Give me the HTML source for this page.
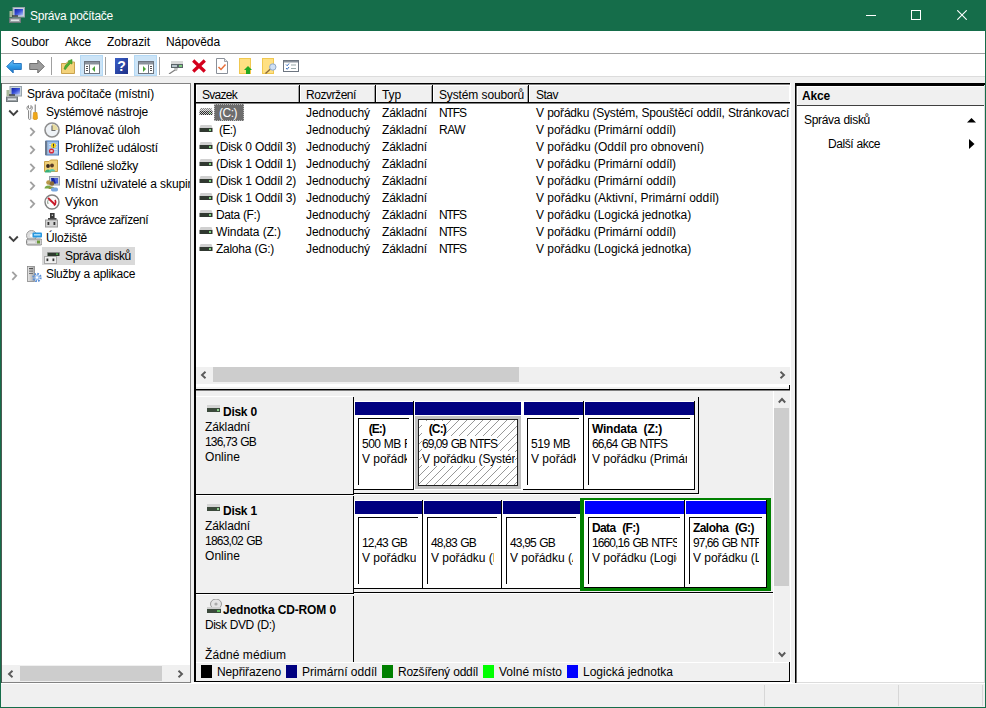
<!DOCTYPE html>
<html lang="cs"><head><meta charset="utf-8"><title>Správa počítače</title>
<style>
html,body{margin:0;padding:0}
body{width:986px;height:708px;position:relative;overflow:hidden;background:#f0f0f0;font:12px/16px 'Liberation Sans',sans-serif;}
body>div,body>svg{position:absolute;display:block}
.t{white-space:pre;height:16px;line-height:16px}
</style></head><body>
<div style="left:0px;top:0px;width:986px;height:708px;background:#156d4a;"></div>
<div style="left:1px;top:31px;width:984px;height:676px;background:#f0f0f0;"></div>
<div class="t" style="left:30px;top:8px;color:#fff;letter-spacing:-0.27px;word-spacing:0.27px;">Správa počítače</div>
<div style="left:866px;top:15px;width:10px;height:1px;background:#fff;"></div>
<div style="left:911px;top:10px;width:10px;height:10px;background:transparent;border:1px solid #fff;box-sizing:border-box"></div>
<svg style="left:957px;top:10px" width="10" height="10" viewBox="0 0 10 10"><path d="M0.3 0.3 L9.7 9.7 M9.7 0.3 L0.3 9.7" stroke="#fff" stroke-width="1.1" fill="none"/></svg>
<svg style="left:9px;top:7px" width="16" height="16" viewBox="0 0 16 16"><defs><linearGradient id="gpc0" x1="0" y1="0" x2="1" y2="1"><stop offset="0" stop-color="#1020a0"/><stop offset="0.5" stop-color="#3850d8"/><stop offset="1" stop-color="#b8c8f8"/></linearGradient></defs>
<rect x="4" y="0.5" width="11.5" height="9.5" fill="#c8d4dc" stroke="#98a4ac" stroke-width="1"/><rect x="5.5" y="2" width="8.5" height="6.5" fill="url(#gpc0)"/>
<rect x="0.5" y="4" width="3" height="6" fill="#a8b89a"/><path d="M3 9 L9 9" stroke="#222" stroke-width="1.2"/>
<rect x="0.5" y="11" width="11" height="4.5" fill="#9aa0a4" stroke="#70787c" stroke-width="1"/><rect x="2" y="12.5" width="8" height="1.5" fill="#e0e4e8"/></svg>
<div style="left:1px;top:31px;width:984px;height:22px;background:#fff;"></div>
<div class="t" style="left:11px;top:34px;color:#000;letter-spacing:-0.12px;">Soubor</div>
<div class="t" style="left:65px;top:34px;color:#000;letter-spacing:-0.17px;">Akce</div>
<div class="t" style="left:107px;top:34px;color:#000;letter-spacing:-0.04px;">Zobrazit</div>
<div class="t" style="left:166px;top:34px;color:#000;letter-spacing:-0.09px;">Nápověda</div>
<div style="left:1px;top:53px;width:984px;height:1px;background:#a0a0a0;"></div>
<div style="left:1px;top:54px;width:984px;height:22px;background:#fff;"></div>
<div style="left:1px;top:76px;width:984px;height:1px;background:#dcdcdc;"></div>
<div style="left:1px;top:83px;width:190px;height:600px;background:#828282;"></div>
<div style="left:1px;top:83px;width:1px;height:600px;background:#4a5a52;"></div>
<div style="left:2px;top:84px;width:188px;height:598px;background:#fff;"></div>
<svg style="left:6px;top:86px" width="16" height="16" viewBox="0 0 16 16"><defs><linearGradient id="gpc" x1="0" y1="0" x2="1" y2="1"><stop offset="0" stop-color="#1020a0"/><stop offset="0.5" stop-color="#3850d8"/><stop offset="1" stop-color="#b8c8f8"/></linearGradient></defs>
<rect x="4" y="0.5" width="11.5" height="9.5" fill="#c8d4dc" stroke="#98a4ac" stroke-width="1"/><rect x="5.5" y="2" width="8.5" height="6.5" fill="url(#gpc)"/>
<rect x="0.5" y="4" width="3" height="6" fill="#a8b89a"/><path d="M3 9 L9 9" stroke="#222" stroke-width="1.2"/>
<rect x="0.5" y="11" width="11" height="4.5" fill="#9aa0a4" stroke="#70787c" stroke-width="1"/><rect x="2" y="12.5" width="8" height="1.5" fill="#e0e4e8"/></svg>
<div class="t" style="left:27px;top:86px;color:#000;letter-spacing:-0.17px;word-spacing:0.17px;">Správa počítače (místní)</div>
<svg style="left:8px;top:109px" width="11" height="8" viewBox="0 0 11 8"><path d="M1.2 1.5 L5.5 5.8 L9.8 1.5" stroke="#404040" stroke-width="1.9" fill="none"/></svg>
<svg style="left:26px;top:104px" width="16" height="16" viewBox="0 0 16 16"><path d="M2.5 1.5 C0.5 2.5 0.5 5.5 2.5 6.5 L2.5 14.5 C2.5 15.7 4.8 15.7 4.8 14.5 L4.8 6.5 C6.8 5.5 6.8 2.5 5 1.5 L5 4 L3.6 4.6 L2.5 4 Z" fill="#f4f4f4" stroke="#8a8a8a" stroke-width="1"/>
<rect x="8.6" y="0.5" width="1.4" height="8" fill="#9a9a9a"/><path d="M7.5 8.5 L11 8.5 L11.5 14.5 C11.5 16 7 16 7 14.5 Z" fill="#f0a818" stroke="#d08a08" stroke-width="0.6"/></svg>
<div class="t" style="left:46px;top:104px;color:#000;letter-spacing:-0.20px;word-spacing:0.20px;">Systémové nástroje</div>
<svg style="left:29px;top:127px" width="7" height="10" viewBox="0 0 7 10"><path d="M1.3 0.8 L5.2 4.8 L1.3 8.8" stroke="#a0a0a0" stroke-width="1.8" fill="none"/></svg>
<svg style="left:44px;top:122px" width="16" height="16" viewBox="0 0 16 16"><circle cx="8" cy="8" r="7" fill="#eef2f6" stroke="#8e8e8e" stroke-width="1.6"/><path d="M8 8 L14 8 A6 6 0 0 0 8 2 Z" fill="#e8dca0"/><path d="M8 3.5 L8 8.5 L11.5 8.5" stroke="#707070" stroke-width="1.2" fill="none"/></svg>
<div class="t" style="left:65px;top:122px;color:#000;letter-spacing:-0.03px;word-spacing:0.03px;">Plánovač úloh</div>
<svg style="left:29px;top:145px" width="7" height="10" viewBox="0 0 7 10"><path d="M1.3 0.8 L5.2 4.8 L1.3 8.8" stroke="#a0a0a0" stroke-width="1.8" fill="none"/></svg>
<svg style="left:44px;top:140px" width="16" height="16" viewBox="0 0 16 16"><rect x="2" y="1" width="12.5" height="14" fill="#9fc0e8" stroke="#4a78b8" stroke-width="1"/><rect x="1" y="1" width="2.2" height="14" fill="#6a7a90"/>
<path d="M5 4.5 H13 M5 7 H13 M5 9.5 H13 M5 12 H13" stroke="#dce8f8" stroke-width="0.8"/>
<circle cx="9.5" cy="5.5" r="2.6" fill="#f2d020"/><rect x="9" y="3.8" width="1" height="2.4" fill="#333"/><rect x="9" y="6.6" width="1" height="1" fill="#333"/>
<circle cx="7.5" cy="11" r="2.6" fill="#d82838"/><path d="M6.5 10 L8.5 12 M8.5 10 L6.5 12" stroke="#fff" stroke-width="0.9"/></svg>
<div class="t" style="left:65px;top:140px;color:#000;letter-spacing:-0.14px;word-spacing:0.14px;">Prohlížeč událostí</div>
<svg style="left:29px;top:163px" width="7" height="10" viewBox="0 0 7 10"><path d="M1.3 0.8 L5.2 4.8 L1.3 8.8" stroke="#a0a0a0" stroke-width="1.8" fill="none"/></svg>
<svg style="left:44px;top:158px" width="16" height="16" viewBox="0 0 16 16"><path d="M0.5 3.5 L5 3.5 L6.5 2 L13.5 2 L13.5 13.5 L0.5 13.5 Z" fill="#f0d078" stroke="#c8a048" stroke-width="1"/>
<circle cx="4" cy="8" r="1.9" fill="#3a2a20"/><circle cx="8" cy="7.5" r="1.9" fill="#5a3a28"/>
<path d="M0.8 14.5 C1 10.5 7 10.5 7.2 14.5 Z" fill="#38b078"/><path d="M5 13.5 C5.2 10 11 10 11.2 13.5 Z" fill="#58c8b0"/></svg>
<div class="t" style="left:65px;top:158px;color:#000;letter-spacing:-0.34px;word-spacing:0.34px;">Sdílené složky</div>
<svg style="left:29px;top:181px" width="7" height="10" viewBox="0 0 7 10"><path d="M1.3 0.8 L5.2 4.8 L1.3 8.8" stroke="#a0a0a0" stroke-width="1.8" fill="none"/></svg>
<svg style="left:44px;top:176px" width="16" height="16" viewBox="0 0 16 16"><rect x="5.5" y="0.5" width="10" height="8.5" fill="#c8d0d8" stroke="#98a0a8"/><rect x="7" y="2" width="7" height="5.5" fill="#4a60d8"/><path d="M7 2 L10 2 L12 7.5 L9 7.5 Z" fill="#1828a0"/>
<circle cx="4.5" cy="6.5" r="2.3" fill="#b89848"/><circle cx="8" cy="7.5" r="2.3" fill="#8a6a38"/>
<path d="M0.5 12.5 C0.7 8.5 7.5 8.5 7.7 12.5 Z" fill="#78a848"/><path d="M4.5 13 C4.7 9.5 10.5 9.5 10.7 13 Z" fill="#989838"/><rect x="7" y="11.5" width="7" height="4" rx="1.8" fill="#78a8e0"/></svg>
<div class="t" style="left:65px;top:176px;color:#000;letter-spacing:-0.10px;word-spacing:0.10px;width:125px;overflow:hidden;">Místní uživatelé a skupiny</div>
<svg style="left:29px;top:199px" width="7" height="10" viewBox="0 0 7 10"><path d="M1.3 0.8 L5.2 4.8 L1.3 8.8" stroke="#a0a0a0" stroke-width="1.8" fill="none"/></svg>
<svg style="left:44px;top:194px" width="16" height="16" viewBox="0 0 16 16"><circle cx="8" cy="8" r="7" fill="#fbfbfb" stroke="#808080" stroke-width="1.4"/><path d="M4 4 L11.5 11" stroke="#c81828" stroke-width="2"/><path d="M11 6 A4.5 4.5 0 0 1 10 11.5" stroke="#c81828" stroke-width="1.6" fill="none"/><path d="M4 10 A4.5 4.5 0 0 1 4.5 5.5" stroke="#889a88" stroke-width="1" fill="none"/></svg>
<div class="t" style="left:65px;top:194px;color:#000;letter-spacing:-0.07px;">Výkon</div>
<svg style="left:44px;top:212px" width="16" height="16" viewBox="0 0 16 16"><rect x="6" y="1" width="4.6" height="6.5" fill="#383838"/><rect x="7.7" y="2.6" width="1.2" height="1.4" fill="#d8d8d8"/><rect x="4" y="6" width="8.5" height="2" fill="#484848"/><rect x="1.5" y="8" width="12" height="7" fill="#d4d4d4" stroke="#9a9a9a"/><rect x="3.5" y="10" width="1.8" height="3" fill="#333"/><rect x="9.5" y="10" width="1.8" height="3" fill="#333"/></svg>
<div class="t" style="left:65px;top:212px;color:#000;letter-spacing:-0.47px;word-spacing:0.47px;">Správce zařízení</div>
<svg style="left:8px;top:235px" width="11" height="8" viewBox="0 0 11 8"><path d="M1.2 1.5 L5.5 5.8 L9.8 1.5" stroke="#404040" stroke-width="1.9" fill="none"/></svg>
<svg style="left:26px;top:230px" width="16" height="16" viewBox="0 0 16 16"><circle cx="5.5" cy="5.5" r="5" fill="#dcdcdc" stroke="#a0a0a0"/><circle cx="5.5" cy="5.5" r="1.5" fill="#fff"/>
<rect x="6.5" y="2.5" width="9.5" height="5" rx="1" fill="#2898e0"/><rect x="8" y="4" width="6.5" height="1.6" fill="#a8dcf8"/>
<rect x="0.5" y="9" width="15.5" height="6" rx="1.5" fill="#d0d0d0" stroke="#888"/><rect x="11" y="10.5" width="3" height="3" fill="#6a9a3a"/><rect x="2" y="11.5" width="7" height="1.2" fill="#f4f4f4"/></svg>
<div class="t" style="left:46px;top:230px;color:#000;letter-spacing:-0.21px;">Úložiště</div>
<div style="left:42px;top:247px;width:93px;height:18px;background:#d9d9d9;"></div>
<svg style="left:44px;top:248px" width="16" height="16" viewBox="0 0 16 16"><rect x="3.5" y="4.5" width="12" height="3.5" fill="#2e3a2e"/><rect x="3.5" y="4" width="12" height="1" fill="#8a8a8a"/><rect x="12" y="5.5" width="2" height="1.2" fill="#58c858"/>
<rect x="0.5" y="8.5" width="12" height="7" fill="#f0f0f0" stroke="#a8a8a8"/><rect x="2.5" y="10.5" width="1.8" height="2.6" fill="#333"/><rect x="8.5" y="10.5" width="1.8" height="2.6" fill="#333"/></svg>
<div class="t" style="left:65px;top:248px;color:#000;letter-spacing:-0.31px;word-spacing:0.31px;">Správa disků</div>
<svg style="left:11px;top:271px" width="7" height="10" viewBox="0 0 7 10"><path d="M1.3 0.8 L5.2 4.8 L1.3 8.8" stroke="#a0a0a0" stroke-width="1.8" fill="none"/></svg>
<svg style="left:26px;top:266px" width="16" height="16" viewBox="0 0 16 16"><defs><linearGradient id="gsv" x1="0" y1="0" x2="1" y2="0"><stop offset="0" stop-color="#e8e8e8"/><stop offset="1" stop-color="#a8a8a8"/></linearGradient></defs>
<rect x="1.5" y="0.5" width="7" height="15" fill="url(#gsv)" stroke="#888" stroke-width="0.8"/><rect x="3" y="2" width="4" height="1.2" fill="#505050"/><rect x="3" y="4.6" width="4" height="1" fill="#707070"/><rect x="3" y="7" width="4" height="1" fill="#707070"/>
<circle cx="11" cy="11.5" r="3.6" fill="none" stroke="#5a90d8" stroke-width="2.2" stroke-dasharray="1.6 1.2"/><circle cx="11" cy="11.5" r="2.6" fill="#9cc0f0"/><circle cx="11" cy="11.5" r="1.2" fill="#fff"/></svg>
<div class="t" style="left:46px;top:266px;color:#000;letter-spacing:-0.29px;word-spacing:0.29px;">Služby a aplikace</div>
<div style="left:2px;top:665px;width:188px;height:17px;background:#f0f0f0;"></div>
<div style="left:20px;top:666px;width:142px;height:15px;background:#cdcdcd;"></div>
<svg style="left:7px;top:670px" width="7" height="8" viewBox="0 0 7 8"><path d="M5.5 0.8 L2 4 L5.5 7.2" stroke="#5a5a5a" stroke-width="1.9" fill="none"/></svg>
<svg style="left:177px;top:670px" width="7" height="8" viewBox="0 0 7 8"><path d="M1.5 0.8 L5 4 L1.5 7.2" stroke="#5a5a5a" stroke-width="1.9" fill="none"/></svg>
<div style="left:194px;top:83px;width:597px;height:600px;background:#000;"></div>
<div style="left:196px;top:84px;width:595px;height:1px;background:#808080;"></div>
<div style="left:196px;top:85px;width:594px;height:597px;background:#fff;"></div>
<div style="left:197px;top:86px;width:592px;height:16px;background:#f0f0f0;"></div>
<div style="left:196px;top:102px;width:594px;height:1px;background:#000;"></div>
<div style="left:196px;top:103px;width:594px;height:1px;background:#808080;"></div>
<div class="t" style="left:202px;top:87px;color:#000;letter-spacing:-0.73px;">Svazek</div>
<div style="left:298px;top:86px;width:1px;height:16px;background:#a0a0a0;"></div>
<div style="left:299px;top:85px;width:1px;height:18px;background:#000;"></div>
<div style="left:300px;top:85px;width:1px;height:17px;background:#fff;"></div>
<div class="t" style="left:306px;top:87px;color:#000;letter-spacing:-0.45px;">Rozvržení</div>
<div style="left:374px;top:86px;width:1px;height:16px;background:#a0a0a0;"></div>
<div style="left:375px;top:85px;width:1px;height:18px;background:#000;"></div>
<div style="left:376px;top:85px;width:1px;height:17px;background:#fff;"></div>
<div class="t" style="left:382px;top:87px;color:#000;letter-spacing:-0.11px;">Typ</div>
<div style="left:431px;top:86px;width:1px;height:16px;background:#a0a0a0;"></div>
<div style="left:432px;top:85px;width:1px;height:18px;background:#000;"></div>
<div style="left:433px;top:85px;width:1px;height:17px;background:#fff;"></div>
<div class="t" style="left:439px;top:87px;color:#000;letter-spacing:-0.13px;word-spacing:0.13px;">Systém souborů</div>
<div style="left:527px;top:86px;width:1px;height:16px;background:#a0a0a0;"></div>
<div style="left:528px;top:85px;width:1px;height:18px;background:#000;"></div>
<div style="left:529px;top:85px;width:1px;height:17px;background:#fff;"></div>
<div class="t" style="left:536px;top:87px;color:#000;letter-spacing:-0.50px;">Stav</div>
<div style="left:214px;top:104px;width:30px;height:17px;background:#6d6d6d;outline:1px dotted #bbb;outline-offset:-1px"></div>
<svg style="left:199px;top:105px" width="16" height="16" viewBox="0 0 16 16"><defs><pattern id="chk" width="2" height="2" patternUnits="userSpaceOnUse"><rect x="0" y="0" width="1" height="1" fill="#fff"/><rect x="1" y="1" width="1" height="1" fill="#fff"/></pattern></defs><path d="M1.5 3 L12.5 3 L13.5 6 L0.5 6 Z" fill="#8a8a8a"/><rect x="0.5" y="6" width="13" height="4" fill="#2a2a2a"/><rect x="10" y="7" width="2" height="2" fill="#3a7a3a"/><rect x="0" y="3" width="14" height="7" fill="url(#chk)" opacity="0.75"/></svg>
<div class="t" style="left:219px;top:105px;color:#fff;letter-spacing:-0.50px;">(C:)</div>
<div class="t" style="left:306px;top:105px;color:#000;letter-spacing:-0.07px;">Jednoduchý</div>
<div class="t" style="left:382px;top:105px;color:#000;letter-spacing:-0.13px;">Základní</div>
<div class="t" style="left:439px;top:105px;color:#000;letter-spacing:-1.09px;">NTFS</div>
<div class="t" style="left:536px;top:105px;color:#000;letter-spacing:-0.20px;word-spacing:0.20px;">V pořádku (Systém, Spouštěcí oddíl, Stránkovací</div>
<svg style="left:199px;top:122px" width="16" height="16" viewBox="0 0 16 16"><path d="M1.5 3 L12.5 3 L13.5 6 L0.5 6 Z" fill="#d0d0d0"/><rect x="0.5" y="6" width="13" height="4" fill="#303830"/><rect x="10" y="7" width="2" height="2" fill="#7fd07f"/></svg>
<div class="t" style="left:219px;top:122px;color:#000;letter-spacing:-0.59px;">(E:)</div>
<div class="t" style="left:306px;top:122px;color:#000;letter-spacing:-0.07px;">Jednoduchý</div>
<div class="t" style="left:382px;top:122px;color:#000;letter-spacing:-0.13px;">Základní</div>
<div class="t" style="left:439px;top:122px;color:#000;letter-spacing:-0.52px;">RAW</div>
<div class="t" style="left:536px;top:122px;color:#000;letter-spacing:-0.03px;word-spacing:0.03px;">V pořádku (Primární oddíl)</div>
<svg style="left:199px;top:139px" width="16" height="16" viewBox="0 0 16 16"><path d="M1.5 3 L12.5 3 L13.5 6 L0.5 6 Z" fill="#d0d0d0"/><rect x="0.5" y="6" width="13" height="4" fill="#303830"/><rect x="10" y="7" width="2" height="2" fill="#7fd07f"/></svg>
<div class="t" style="left:216px;top:139px;color:#000;letter-spacing:-0.26px;word-spacing:0.26px;">(Disk 0 Oddíl 3)</div>
<div class="t" style="left:306px;top:139px;color:#000;letter-spacing:-0.07px;">Jednoduchý</div>
<div class="t" style="left:382px;top:139px;color:#000;letter-spacing:-0.13px;">Základní</div>
<div class="t" style="left:536px;top:139px;color:#000;">V pořádku (Oddíl pro obnovení)</div>
<svg style="left:199px;top:156px" width="16" height="16" viewBox="0 0 16 16"><path d="M1.5 3 L12.5 3 L13.5 6 L0.5 6 Z" fill="#d0d0d0"/><rect x="0.5" y="6" width="13" height="4" fill="#303830"/><rect x="10" y="7" width="2" height="2" fill="#7fd07f"/></svg>
<div class="t" style="left:216px;top:156px;color:#000;letter-spacing:-0.26px;word-spacing:0.26px;">(Disk 1 Oddíl 1)</div>
<div class="t" style="left:306px;top:156px;color:#000;letter-spacing:-0.07px;">Jednoduchý</div>
<div class="t" style="left:382px;top:156px;color:#000;letter-spacing:-0.13px;">Základní</div>
<div class="t" style="left:536px;top:156px;color:#000;letter-spacing:-0.03px;word-spacing:0.03px;">V pořádku (Primární oddíl)</div>
<svg style="left:199px;top:173px" width="16" height="16" viewBox="0 0 16 16"><path d="M1.5 3 L12.5 3 L13.5 6 L0.5 6 Z" fill="#d0d0d0"/><rect x="0.5" y="6" width="13" height="4" fill="#303830"/><rect x="10" y="7" width="2" height="2" fill="#7fd07f"/></svg>
<div class="t" style="left:216px;top:173px;color:#000;letter-spacing:-0.26px;word-spacing:0.26px;">(Disk 1 Oddíl 2)</div>
<div class="t" style="left:306px;top:173px;color:#000;letter-spacing:-0.07px;">Jednoduchý</div>
<div class="t" style="left:382px;top:173px;color:#000;letter-spacing:-0.13px;">Základní</div>
<div class="t" style="left:536px;top:173px;color:#000;letter-spacing:-0.03px;word-spacing:0.03px;">V pořádku (Primární oddíl)</div>
<svg style="left:199px;top:190px" width="16" height="16" viewBox="0 0 16 16"><path d="M1.5 3 L12.5 3 L13.5 6 L0.5 6 Z" fill="#d0d0d0"/><rect x="0.5" y="6" width="13" height="4" fill="#303830"/><rect x="10" y="7" width="2" height="2" fill="#7fd07f"/></svg>
<div class="t" style="left:216px;top:190px;color:#000;letter-spacing:-0.26px;word-spacing:0.26px;">(Disk 1 Oddíl 3)</div>
<div class="t" style="left:306px;top:190px;color:#000;letter-spacing:-0.07px;">Jednoduchý</div>
<div class="t" style="left:382px;top:190px;color:#000;letter-spacing:-0.13px;">Základní</div>
<div class="t" style="left:536px;top:190px;color:#000;letter-spacing:-0.01px;word-spacing:0.01px;">V pořádku (Aktivní, Primární oddíl)</div>
<svg style="left:199px;top:207px" width="16" height="16" viewBox="0 0 16 16"><path d="M1.5 3 L12.5 3 L13.5 6 L0.5 6 Z" fill="#d0d0d0"/><rect x="0.5" y="6" width="13" height="4" fill="#303830"/><rect x="10" y="7" width="2" height="2" fill="#7fd07f"/></svg>
<div class="t" style="left:216px;top:207px;color:#000;letter-spacing:-0.42px;word-spacing:0.42px;">Data (F:)</div>
<div class="t" style="left:306px;top:207px;color:#000;letter-spacing:-0.07px;">Jednoduchý</div>
<div class="t" style="left:382px;top:207px;color:#000;letter-spacing:-0.13px;">Základní</div>
<div class="t" style="left:439px;top:207px;color:#000;letter-spacing:-1.09px;">NTFS</div>
<div class="t" style="left:536px;top:207px;color:#000;letter-spacing:-0.04px;word-spacing:0.04px;">V pořádku (Logická jednotka)</div>
<svg style="left:199px;top:224px" width="16" height="16" viewBox="0 0 16 16"><path d="M1.5 3 L12.5 3 L13.5 6 L0.5 6 Z" fill="#d0d0d0"/><rect x="0.5" y="6" width="13" height="4" fill="#303830"/><rect x="10" y="7" width="2" height="2" fill="#7fd07f"/></svg>
<div class="t" style="left:216px;top:224px;color:#000;letter-spacing:-0.09px;word-spacing:0.09px;">Windata (Z:)</div>
<div class="t" style="left:306px;top:224px;color:#000;letter-spacing:-0.07px;">Jednoduchý</div>
<div class="t" style="left:382px;top:224px;color:#000;letter-spacing:-0.13px;">Základní</div>
<div class="t" style="left:439px;top:224px;color:#000;letter-spacing:-1.09px;">NTFS</div>
<div class="t" style="left:536px;top:224px;color:#000;letter-spacing:-0.03px;word-spacing:0.03px;">V pořádku (Primární oddíl)</div>
<svg style="left:199px;top:241px" width="16" height="16" viewBox="0 0 16 16"><path d="M1.5 3 L12.5 3 L13.5 6 L0.5 6 Z" fill="#d0d0d0"/><rect x="0.5" y="6" width="13" height="4" fill="#303830"/><rect x="10" y="7" width="2" height="2" fill="#7fd07f"/></svg>
<div class="t" style="left:216px;top:241px;color:#000;letter-spacing:-0.27px;word-spacing:0.27px;">Zaloha (G:)</div>
<div class="t" style="left:306px;top:241px;color:#000;letter-spacing:-0.07px;">Jednoduchý</div>
<div class="t" style="left:382px;top:241px;color:#000;letter-spacing:-0.13px;">Základní</div>
<div class="t" style="left:439px;top:241px;color:#000;letter-spacing:-1.09px;">NTFS</div>
<div class="t" style="left:536px;top:241px;color:#000;letter-spacing:-0.04px;word-spacing:0.04px;">V pořádku (Logická jednotka)</div>
<div style="left:196px;top:367px;width:594px;height:17px;background:#f0f0f0;"></div>
<div style="left:213px;top:367px;width:306px;height:15px;background:#cdcdcd;"></div>
<svg style="left:200px;top:371px" width="7" height="8" viewBox="0 0 7 8"><path d="M5.5 0.8 L2 4 L5.5 7.2" stroke="#5a5a5a" stroke-width="1.9" fill="none"/></svg>
<svg style="left:779px;top:371px" width="7" height="8" viewBox="0 0 7 8"><path d="M1.5 0.8 L5 4 L1.5 7.2" stroke="#5a5a5a" stroke-width="1.9" fill="none"/></svg>
<div style="left:196px;top:384px;width:594px;height:3px;background:#fff;"></div>
<div style="left:196px;top:387px;width:594px;height:2px;background:#f0f0f0;"></div>
<div style="left:196px;top:389px;width:594px;height:1px;background:#000;"></div>
<div style="left:196px;top:390px;width:594px;height:1px;background:#808080;"></div>
<div style="left:789px;top:385px;width:1px;height:5px;background:#000;"></div>
<div style="left:790px;top:83px;width:1px;height:600px;background:#fff;"></div>
<div style="left:196px;top:391px;width:594px;height:271px;background:#f0f0f0;"></div>
<div style="left:196px;top:396px;width:157px;height:1px;background:#fff;"></div>
<div style="left:353px;top:397px;width:1px;height:98px;background:#000;"></div>
<div style="left:196px;top:494px;width:158px;height:1px;background:#000;"></div>
<div style="left:353px;top:493px;width:346px;height:1px;background:#000;"></div>
<div style="left:354px;top:494px;width:346px;height:1px;background:#fff;"></div>
<svg style="left:207px;top:405px" width="13" height="7" viewBox="0 0 13 7"><rect x="0" y="0" width="13" height="3" fill="#d4d4d4"/><rect x="0" y="3" width="13" height="4" fill="#3c4a3c"/><rect x="10" y="4" width="2" height="2" fill="#8fd08f"/></svg>
<div class="t" style="left:223px;top:404px;color:#000;font-weight:bold;letter-spacing:-0.27px;word-spacing:0.27px;">Disk 0</div>
<div class="t" style="left:205px;top:419px;color:#000;letter-spacing:-0.13px;">Základní</div>
<div class="t" style="left:205px;top:434px;color:#000;letter-spacing:-0.80px;word-spacing:0.80px;">136,73 GB</div>
<div class="t" style="left:205px;top:449px;color:#000;letter-spacing:0.05px;">Online</div>
<div style="left:354px;top:401px;width:59px;height:89px;background:#fff;"></div>
<div style="left:355px;top:402px;width:58px;height:13px;background:#000080;"></div>
<div style="left:413px;top:401px;width:1px;height:89px;background:#000;"></div>
<div style="left:354px;top:489px;width:60px;height:1px;background:#000;"></div>
<div style="left:358px;top:418px;width:51px;height:1px;background:#000;"></div>
<div style="left:358px;top:418px;width:1px;height:67px;background:#000;"></div>
<div class="t" style="left:362px;top:421px;color:#000;font-weight:bold;letter-spacing:-0.92px;word-spacing:0.92px;">  (E:)</div>
<div class="t" style="left:362px;top:436px;color:#000;letter-spacing:-0.53px;word-spacing:0.53px;width:45px;overflow:hidden;">500 MB RAW</div>
<div class="t" style="left:362px;top:451px;color:#000;letter-spacing:-0.03px;word-spacing:0.03px;width:45px;overflow:hidden;">V pořádku (Primární oddíl)</div>
<div style="left:414px;top:401px;width:108px;height:89px;background:#fff;"></div>
<div style="left:415px;top:402px;width:107px;height:13px;background:#000080;"></div>
<div style="left:521px;top:401px;width:2px;height:90px;background:#fff;"></div>
<svg style="left:415px;top:416px" width="106" height="73" viewBox="0 0 106 73"><defs><pattern id="hatch" width="8" height="8" patternUnits="userSpaceOnUse"><path d="M-1 9 L9 -1 M-1 1 L1 -1 M7 9 L9 7" stroke="#858585" stroke-width="0.85" fill="none"/></pattern></defs><rect x="0" y="0" width="106" height="73" fill="#c0c0c0"/><rect x="3.5" y="3.5" width="99" height="66" fill="#fff"/><rect x="3.5" y="3.5" width="99" height="66" fill="url(#hatch)" stroke="#202020" stroke-width="1"/></svg>
<div class="t" style="left:422px;top:421px;color:#000;font-weight:bold;letter-spacing:-0.83px;word-spacing:0.83px;background:#fff;height:15px;">  (C:)</div>
<div class="t" style="left:422px;top:436px;color:#000;letter-spacing:-0.94px;word-spacing:0.94px;background:#fff;height:15px;">69,09 GB NTFS</div>
<div class="t" style="left:422px;top:451px;color:#000;letter-spacing:-0.18px;word-spacing:0.18px;width:93px;overflow:hidden;background:#fff;height:15px;">V pořádku (Systém, Spouštěcí oddíl</div>
<div style="left:523px;top:401px;width:60px;height:89px;background:#fff;"></div>
<div style="left:524px;top:402px;width:59px;height:13px;background:#000080;"></div>
<div style="left:583px;top:401px;width:1px;height:89px;background:#000;"></div>
<div style="left:523px;top:489px;width:61px;height:1px;background:#000;"></div>
<div style="left:527px;top:418px;width:52px;height:1px;background:#000;"></div>
<div style="left:527px;top:418px;width:1px;height:67px;background:#000;"></div>
<div class="t" style="left:531px;top:436px;color:#000;letter-spacing:-0.47px;word-spacing:0.47px;">519 MB</div>
<div class="t" style="left:531px;top:451px;color:#000;width:45px;overflow:hidden;">V pořádku (Oddíl pro obnovení)</div>
<div style="left:584px;top:401px;width:110px;height:89px;background:#fff;"></div>
<div style="left:585px;top:402px;width:109px;height:13px;background:#000080;"></div>
<div style="left:694px;top:401px;width:1px;height:89px;background:#000;"></div>
<div style="left:584px;top:489px;width:111px;height:1px;background:#000;"></div>
<div style="left:588px;top:418px;width:102px;height:1px;background:#000;"></div>
<div style="left:588px;top:418px;width:1px;height:67px;background:#000;"></div>
<div class="t" style="left:592px;top:421px;color:#000;font-weight:bold;letter-spacing:-0.23px;word-spacing:0.23px;">Windata  (Z:)</div>
<div class="t" style="left:592px;top:436px;color:#000;letter-spacing:-0.94px;word-spacing:0.94px;">66,64 GB NTFS</div>
<div class="t" style="left:592px;top:451px;color:#000;letter-spacing:-0.03px;word-spacing:0.03px;width:95px;overflow:hidden;">V pořádku (Primární oddíl)</div>
<div style="left:698px;top:397px;width:1px;height:97px;background:#000;"></div>
<div style="left:196px;top:495px;width:157px;height:1px;background:#fff;"></div>
<div style="left:353px;top:496px;width:1px;height:98px;background:#000;"></div>
<div style="left:196px;top:593px;width:158px;height:1px;background:#000;"></div>
<div style="left:353px;top:592px;width:421px;height:1px;background:#000;"></div>
<div style="left:354px;top:593px;width:421px;height:1px;background:#fff;"></div>
<svg style="left:207px;top:504px" width="13" height="7" viewBox="0 0 13 7"><rect x="0" y="0" width="13" height="3" fill="#d4d4d4"/><rect x="0" y="3" width="13" height="4" fill="#3c4a3c"/><rect x="10" y="4" width="2" height="2" fill="#8fd08f"/></svg>
<div class="t" style="left:223px;top:503px;color:#000;font-weight:bold;letter-spacing:-0.27px;word-spacing:0.27px;">Disk 1</div>
<div class="t" style="left:205px;top:518px;color:#000;letter-spacing:-0.13px;">Základní</div>
<div class="t" style="left:205px;top:533px;color:#000;letter-spacing:-0.78px;word-spacing:0.78px;">1863,02 GB</div>
<div class="t" style="left:205px;top:548px;color:#000;letter-spacing:0.05px;">Online</div>
<div style="left:354px;top:500px;width:68px;height:89px;background:#fff;"></div>
<div style="left:355px;top:501px;width:67px;height:13px;background:#000080;"></div>
<div style="left:422px;top:500px;width:1px;height:89px;background:#000;"></div>
<div style="left:354px;top:588px;width:69px;height:1px;background:#000;"></div>
<div style="left:358px;top:517px;width:60px;height:1px;background:#000;"></div>
<div style="left:358px;top:517px;width:1px;height:67px;background:#000;"></div>
<div class="t" style="left:362px;top:535px;color:#000;letter-spacing:-0.81px;word-spacing:0.81px;">12,43 GB</div>
<div class="t" style="left:362px;top:550px;color:#000;letter-spacing:-0.03px;word-spacing:0.03px;width:54px;overflow:hidden;">V pořádku (Primární oddíl)</div>
<div style="left:423px;top:500px;width:78px;height:89px;background:#fff;"></div>
<div style="left:424px;top:501px;width:77px;height:13px;background:#000080;"></div>
<div style="left:501px;top:500px;width:1px;height:89px;background:#000;"></div>
<div style="left:423px;top:588px;width:79px;height:1px;background:#000;"></div>
<div style="left:427px;top:517px;width:70px;height:1px;background:#000;"></div>
<div style="left:427px;top:517px;width:1px;height:67px;background:#000;"></div>
<div class="t" style="left:431px;top:535px;color:#000;letter-spacing:-0.81px;word-spacing:0.81px;">48,83 GB</div>
<div class="t" style="left:431px;top:550px;color:#000;letter-spacing:-0.03px;word-spacing:0.03px;width:63px;overflow:hidden;">V pořádku (Primární oddíl)</div>
<div style="left:502px;top:500px;width:78px;height:89px;background:#fff;"></div>
<div style="left:503px;top:501px;width:77px;height:13px;background:#000080;"></div>
<div style="left:580px;top:500px;width:1px;height:89px;background:#000;"></div>
<div style="left:502px;top:588px;width:79px;height:1px;background:#000;"></div>
<div style="left:506px;top:517px;width:70px;height:1px;background:#000;"></div>
<div style="left:506px;top:517px;width:1px;height:67px;background:#000;"></div>
<div class="t" style="left:510px;top:535px;color:#000;letter-spacing:-0.81px;word-spacing:0.81px;">43,95 GB</div>
<div class="t" style="left:510px;top:550px;color:#000;letter-spacing:-0.01px;word-spacing:0.01px;width:63px;overflow:hidden;">V pořádku (Aktivní, Primární oddíl)</div>
<div style="left:580px;top:498px;width:191px;height:93px;background:#008000;"></div>
<div style="left:584px;top:500px;width:100px;height:88px;background:#fff;"></div>
<div style="left:585px;top:501px;width:99px;height:13px;background:#0000ff;"></div>
<div style="left:684px;top:500px;width:1px;height:88px;background:#000;"></div>
<div style="left:584px;top:587px;width:101px;height:1px;background:#000;"></div>
<div style="left:588px;top:517px;width:92px;height:1px;background:#000;"></div>
<div style="left:588px;top:517px;width:1px;height:67px;background:#000;"></div>
<div class="t" style="left:592px;top:520px;color:#000;font-weight:bold;letter-spacing:-0.62px;word-spacing:0.62px;">Data  (F:)</div>
<div class="t" style="left:592px;top:535px;color:#000;letter-spacing:-0.90px;word-spacing:0.90px;width:85px;overflow:hidden;">1660,16 GB NTFS</div>
<div class="t" style="left:592px;top:550px;color:#000;letter-spacing:-0.04px;word-spacing:0.04px;width:85px;overflow:hidden;">V pořádku (Logická jednotka)</div>
<div style="left:685px;top:500px;width:81px;height:88px;background:#fff;"></div>
<div style="left:686px;top:501px;width:80px;height:13px;background:#0000ff;"></div>
<div style="left:766px;top:500px;width:1px;height:88px;background:#000;"></div>
<div style="left:685px;top:587px;width:82px;height:1px;background:#000;"></div>
<div style="left:689px;top:517px;width:73px;height:1px;background:#000;"></div>
<div style="left:689px;top:517px;width:1px;height:67px;background:#000;"></div>
<div class="t" style="left:693px;top:520px;color:#000;font-weight:bold;letter-spacing:-0.57px;word-spacing:0.57px;">Zaloha  (G:)</div>
<div class="t" style="left:693px;top:535px;color:#000;letter-spacing:-0.94px;word-spacing:0.94px;width:66px;overflow:hidden;">97,66 GB NTFS</div>
<div class="t" style="left:693px;top:550px;color:#000;letter-spacing:-0.04px;word-spacing:0.04px;width:66px;overflow:hidden;">V pořádku (Logická jednotka)</div>
<div style="left:767px;top:498px;width:4px;height:93px;background:#008000;"></div>
<div style="left:580px;top:588px;width:191px;height:3px;background:#008000;"></div>
<div style="left:580px;top:498px;width:191px;height:2px;background:#008000;"></div>
<div style="left:196px;top:594px;width:157px;height:1px;background:#fff;"></div>
<div style="left:353px;top:596px;width:1px;height:66px;background:#000;"></div>
<svg style="left:207px;top:599px" width="15" height="14" viewBox="0 0 15 14"><ellipse cx="9" cy="5" rx="5.5" ry="5" fill="#e4e4e4" stroke="#9a9a9a"/><circle cx="9" cy="5" r="1.6" fill="#aaa"/><rect x="0" y="8" width="14" height="2" fill="#cfcfcf"/><rect x="0" y="10" width="14" height="4" fill="#3c4a3c"/><rect x="10" y="11" width="3" height="2" fill="#5fbf5f"/></svg>
<div class="t" style="left:223px;top:602px;color:#000;font-weight:bold;letter-spacing:-0.16px;word-spacing:0.16px;">Jednotka CD-ROM 0</div>
<div class="t" style="left:205px;top:617px;color:#000;letter-spacing:-0.48px;word-spacing:0.48px;">Disk DVD (D:)</div>
<div class="t" style="left:205px;top:647px;color:#000;letter-spacing:0.09px;word-spacing:-0.09px;">Žádné médium</div>
<div style="left:773px;top:391px;width:1px;height:271px;background:#fff;"></div>
<div style="left:774px;top:391px;width:15px;height:271px;background:#f0f0f0;"></div>
<div style="left:774px;top:408px;width:15px;height:178px;background:#cdcdcd;"></div>
<svg style="left:778px;top:397px" width="8" height="7" viewBox="0 0 8 7"><path d="M0.8 5.5 L4 2 L7.2 5.5" stroke="#5a5a5a" stroke-width="1.9" fill="none"/></svg>
<svg style="left:778px;top:651px" width="8" height="7" viewBox="0 0 8 7"><path d="M0.8 1.5 L4 5 L7.2 1.5" stroke="#5a5a5a" stroke-width="1.9" fill="none"/></svg>
<div style="left:196px;top:662px;width:594px;height:1px;background:#fff;"></div>
<div style="left:196px;top:663px;width:593px;height:18px;background:#f0f0f0;"></div>
<div style="left:789px;top:662px;width:1px;height:20px;background:#000;"></div>
<div style="left:194px;top:681px;width:596px;height:1px;background:#000;"></div>
<div style="left:192px;top:682px;width:600px;height:2px;background:#fff;"></div>
<div style="left:201px;top:665px;width:11px;height:13px;background:#000;"></div>
<div class="t" style="left:217px;top:664px;color:#000;letter-spacing:-0.12px;">Nepřiřazeno</div>
<div style="left:286px;top:665px;width:11px;height:13px;background:#000080;"></div>
<div class="t" style="left:302px;top:664px;color:#000;letter-spacing:0.02px;word-spacing:-0.02px;">Primární oddíl</div>
<div style="left:382px;top:665px;width:11px;height:13px;background:#008000;"></div>
<div class="t" style="left:398px;top:664px;color:#000;letter-spacing:-0.24px;word-spacing:0.24px;">Rozšířený oddíl</div>
<div style="left:483px;top:665px;width:11px;height:13px;background:#00ff00;"></div>
<div class="t" style="left:499px;top:664px;color:#000;letter-spacing:0.03px;word-spacing:-0.03px;">Volné místo</div>
<div style="left:567px;top:665px;width:11px;height:13px;background:#0000ff;"></div>
<div class="t" style="left:583px;top:664px;color:#000;letter-spacing:-0.01px;word-spacing:0.01px;">Logická jednotka</div>
<div style="left:795px;top:83px;width:190px;height:600px;background:#000;"></div>
<div style="left:796px;top:86px;width:1px;height:597px;background:#707070;"></div>
<div style="left:797px;top:85px;width:188px;height:598px;background:#fff;"></div>
<div style="left:797px;top:85px;width:188px;height:1px;background:#000;"></div>
<div style="left:798px;top:87px;width:186px;height:18px;background:#f0f0f0;"></div>
<div style="left:797px;top:105px;width:187px;height:1px;background:#404040;"></div>
<div style="left:984px;top:85px;width:1px;height:598px;background:#dcdcdc;"></div>
<div style="left:797px;top:682px;width:188px;height:1px;background:#dcdcdc;"></div>
<div class="t" style="left:802px;top:88px;color:#000;font-weight:bold;letter-spacing:-0.17px;">Akce</div>
<div class="t" style="left:804px;top:112px;color:#000;letter-spacing:-0.31px;word-spacing:0.31px;">Správa disků</div>
<svg style="left:967px;top:118px" width="9" height="5" viewBox="0 0 9 5"><path d="M0 4.6 L4.5 0 L9 4.6 Z" fill="#000"/></svg>
<div class="t" style="left:828px;top:136px;color:#000;letter-spacing:-0.45px;word-spacing:0.45px;">Další akce</div>
<svg style="left:969px;top:139px" width="6" height="10" viewBox="0 0 6 10"><path d="M0 0 L5.5 5 L0 10 Z" fill="#000"/></svg>
<div style="left:1px;top:683px;width:984px;height:1px;background:#fff;"></div>
<div style="left:1px;top:684px;width:984px;height:23px;background:#f0f0f0;"></div>
<div style="left:764px;top:685px;width:1px;height:21px;background:#d7d7d7;"></div>
<div style="left:898px;top:685px;width:1px;height:21px;background:#d7d7d7;"></div>
<div style="left:982px;top:685px;width:1px;height:21px;background:#d7d7d7;"></div>
<svg style="left:6px;top:59px" width="16" height="15" viewBox="0 0 16 15"><defs><linearGradient id="gb" x1="0" y1="0" x2="0" y2="1"><stop offset="0" stop-color="#7cc8f8"/><stop offset="0.5" stop-color="#2f9be8"/><stop offset="1" stop-color="#1b6fc0"/></linearGradient></defs><path d="M0.7 7.5 L7.2 1 L7.2 4.5 L15.3 4.5 L15.3 10.5 L7.2 10.5 L7.2 14 Z" fill="url(#gb)" stroke="#2a78c0" stroke-width="1" stroke-linejoin="round"/></svg>
<svg style="left:29px;top:59px" width="16" height="15" viewBox="0 0 16 15"><path d="M15.3 7.5 L8.8 1 L8.8 4.5 L0.7 4.5 L0.7 10.5 L8.8 10.5 L8.8 14 Z" fill="#9d9d9d" stroke="#6f6f6f" stroke-width="1" stroke-linejoin="round"/></svg>
<div style="left:51px;top:57px;width:1px;height:18px;background:#a0a0a0;"></div>
<svg style="left:60px;top:58px" width="16" height="16" viewBox="0 0 16 16"><path d="M1.5 5.5 L6 5.5 L7.5 4 L14.5 4 L14.5 15.5 L1.5 15.5 Z" fill="#f3d27a" stroke="#c9a24e" stroke-width="1"/><path d="M4 11 C5 7 7 5 9 4.5 L8 3 L12 1.5 L12 6 L10.5 5.5 C9 7 7 9 5.5 11.5 Z" fill="#4caf32" stroke="#3a8f24" stroke-width="0.6"/></svg>
<div style="left:80px;top:55px;width:23px;height:21px;background:#cce4f7;box-sizing:border-box;border:1px solid #b4d9f5"></div>
<svg style="left:84px;top:61px" width="16" height="13" viewBox="0 0 16 13"><rect x="0.5" y="0.5" width="15" height="12" fill="#fff" stroke="#6d7580"/><rect x="1" y="1" width="14" height="2.5" fill="#8a929c"/><line x1="5.5" y1="3.5" x2="5.5" y2="12.5" stroke="#6d7580"/><rect x="2" y="5" width="2" height="1" fill="#555"/><rect x="2" y="7" width="2" height="1" fill="#555"/><rect x="2" y="9" width="2" height="1" fill="#555"/><path d="M11 5 L11 11 L8 8 Z" fill="#4aa336"/></svg>
<div style="left:105px;top:57px;width:1px;height:18px;background:#a0a0a0;"></div>
<svg style="left:115px;top:58px" width="13" height="16" viewBox="0 0 13 16"><defs><linearGradient id="gh" x1="0" y1="0" x2="1" y2="1"><stop offset="0" stop-color="#3a5fc8"/><stop offset="1" stop-color="#1d2f86"/></linearGradient></defs><rect x="0" y="0" width="13" height="16" fill="url(#gh)"/><text x="6.5" y="13" font-family="Liberation Sans,sans-serif" font-weight="bold" font-size="14" fill="#fff" text-anchor="middle">?</text></svg>
<div style="left:134px;top:55px;width:23px;height:21px;background:#cce4f7;box-sizing:border-box;border:1px solid #b4d9f5"></div>
<svg style="left:138px;top:61px" width="16" height="13" viewBox="0 0 16 13"><rect x="0.5" y="0.5" width="15" height="12" fill="#fff" stroke="#6d7580"/><rect x="1" y="1" width="14" height="2.5" fill="#8a929c"/><line x1="10.5" y1="3.5" x2="10.5" y2="12.5" stroke="#6d7580"/><rect x="12" y="5" width="2" height="1" fill="#555"/><rect x="12" y="7" width="2" height="1" fill="#555"/><rect x="12" y="9" width="2" height="1" fill="#555"/><path d="M5 5 L5 11 L8 8 Z" fill="#4aa336"/></svg>
<div style="left:159px;top:57px;width:1px;height:18px;background:#a0a0a0;"></div>
<svg style="left:168px;top:60px" width="16" height="14" viewBox="0 0 16 14"><rect x="3" y="1" width="12" height="3" fill="#d8d8d8"/><rect x="3" y="4" width="12" height="4" fill="#5a6468"/><rect x="4" y="5" width="5" height="2" fill="#b9c4cc"/><rect x="11" y="5" width="3" height="2" fill="#7fd07f"/><path d="M6 8 L10 8 L9 11 L7 11 Z" fill="#bdbdbd"/><path d="M7 10 L1 14" stroke="#808080" stroke-width="1.3"/></svg>
<svg style="left:191px;top:58px" width="16" height="16" viewBox="0 0 16 16"><path d="M2.2 2.5 L13.8 13.5 M13.8 2.5 L2.2 13.5" stroke="#d4001c" stroke-width="3.2" fill="none"/></svg>
<svg style="left:215px;top:58px" width="14" height="16" viewBox="0 0 14 16"><path d="M1.5 0.5 L9.5 0.5 L12.5 3.5 L12.5 15.5 L1.5 15.5 Z" fill="#fff" stroke="#8a9099"/><path d="M9.5 0.5 L9.5 3.5 L12.5 3.5" fill="#e8e8e8" stroke="#8a9099" stroke-width="0.8"/><path d="M3.5 9 L6 11.5 L10.5 6.5" stroke="#e8703a" stroke-width="1.5" fill="none"/></svg>
<svg style="left:239px;top:58px" width="14" height="16" viewBox="0 0 14 16"><rect x="0.5" y="0.5" width="11" height="15" fill="#ffe082" stroke="#f0c850"/><path d="M9 8 L13 12 L11 12 L11 16 L7 16 L7 12 L5 12 Z" fill="#22a822"/></svg>
<svg style="left:262px;top:58px" width="15" height="16" viewBox="0 0 15 16"><rect x="0.5" y="0.5" width="11" height="15" fill="#ffe082" stroke="#f0c850"/><path d="M3.5 15.5 L9 10.5" stroke="#8a6a3a" stroke-width="1.4"/><circle cx="10.8" cy="9" r="3.2" fill="#cfe0f5" stroke="#8fa8c8" stroke-width="1"/></svg>
<svg style="left:283px;top:60px" width="16" height="12" viewBox="0 0 16 12"><rect x="0.5" y="0.5" width="15" height="11" fill="#fff" stroke="#6d7580"/><rect x="1" y="1" width="14" height="1.5" fill="#8a929c"/><path d="M3 4.5 L4.2 5.8 L6 3.5 M3 8 L4.2 9.3 L6 7" stroke="#3a6fc0" stroke-width="1" fill="none"/><rect x="8" y="4.5" width="5" height="1" fill="#9aa"/><rect x="8" y="8" width="5" height="1" fill="#9aa"/></svg>
</body></html>
